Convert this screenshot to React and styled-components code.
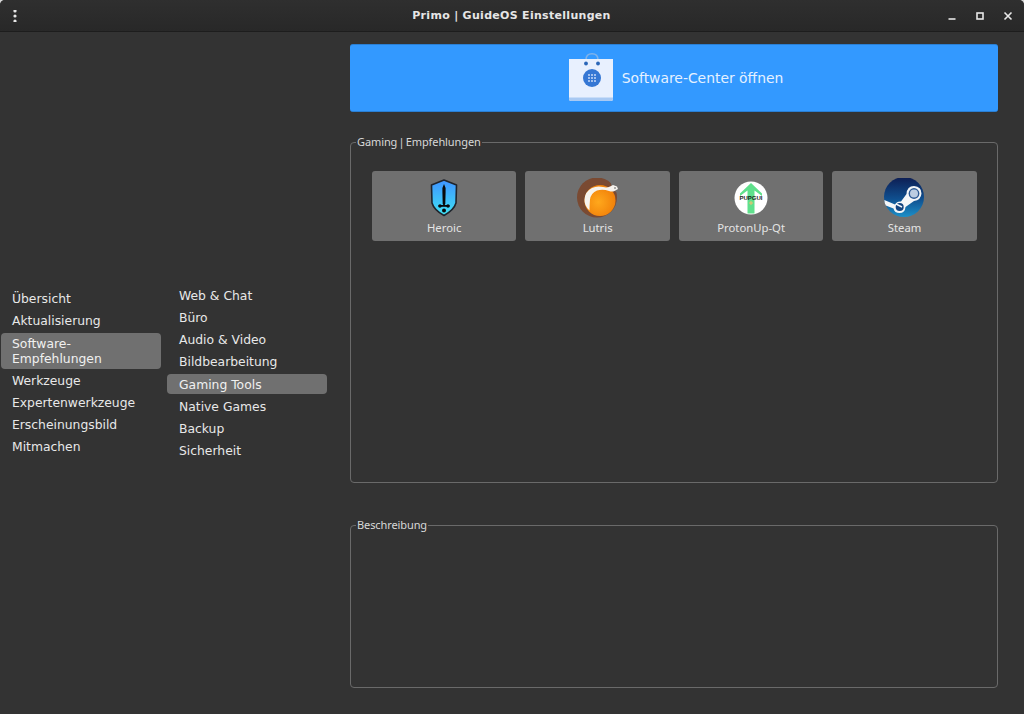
import React from "react";
import styled, { createGlobalStyle } from "styled-components";

const GlobalStyle = createGlobalStyle`
  html, body {
    margin: 0;
    padding: 0;
    height: 100%;
    background: #d8d8d8;
  }
  #root {
    height: 100%;
  }
`;

const Window = styled.div`
  height: 714px;
  display: flex;
  flex-direction: column;
  background: #333333;
  border-radius: 5px 5px 0 0;
  overflow: hidden;
  color: #eeeeee;
  font-family: "DejaVu Sans", sans-serif;
`;
const TitleBar = styled.header`
  height: 32px;
  flex: none;
  display: grid;
  grid-template-columns: 1fr auto 1fr;
  align-items: center;
  box-sizing: border-box;
  padding: 0 10px 0 9px;
  background: linear-gradient(#2f2f2f, #282828);
  border-bottom: 1px solid #1d1d1d;
`;
const Title = styled.h1`
  margin: 0;
  font-size: 11px;
  font-weight: 700;
  letter-spacing: 0.3px;
  color: #e6e6e6;
`;
const Controls = styled.div`
  display: flex;
  gap: 16px;
  justify-content: flex-end;
`;
const ControlIcon = styled.svg`
  display: block;
  width: 12px;
  height: 12px;
`;
const Body = styled.main`
  flex: 1;
  display: flex;
  padding: 12px 26px 26px 1px;
  min-height: 0;
`;
const Nav = styled.nav`
  width: 160px;
  flex: none;
  margin: -12px 6px -26px 0;
  display: flex;
  flex-direction: column;
  justify-content: center;
`;
const SubNav = styled(Nav)`
  margin-top: -11px;
  margin-right: 23px;
`;
const NavItem = styled.div`
  box-sizing: border-box;
  min-height: 22px;
  display: flex;
  align-items: center;
  padding: 0 11px;
  font-size: 12.35px;
  line-height: 15px;
  color: ${(p) => (p.$active ? "#f0f0f0" : "#e8e8e8")};
  background: ${(p) => (p.$active ? "#707070" : "transparent")};
  border-radius: 4px;
`;
const MainItem = styled(NavItem)`
  ${(p) => p.$active && "margin: 1px 0; padding-top: 4px; padding-bottom: 2px;"}
`;
const SubItem = styled(NavItem)`
  padding: 0 12px;
  ${(p) => p.$active && "min-height: 20px; margin: 1px 0 2px; padding-top: 2px;"}
`;
const Content = styled.section`
  flex: 1;
  display: flex;
  flex-direction: column;
  min-width: 0;
`;
const StoreButton = styled.button`
  height: 68px;
  flex: none;
  border: 0;
  border-radius: 3px;
  background: #3399ff;
  border-top: 1px solid #2a7fd4;
  border-bottom: 1px solid #2a7fd4;
  display: flex;
  align-items: center;
  justify-content: center;
  gap: 9px;
  color: #e6f1ff;
  font-family: "DejaVu Sans", sans-serif;
  font-size: 13.9px;
  padding: 0 0 0 4px;
`;
const Group = styled.fieldset`
  margin: 0;
  min-width: 0;
  padding: 0;
  border: 1px solid #6a6a6a;
  border-radius: 4px;
  box-sizing: border-box;
`;
const RecommendGroup = styled(Group)`
  height: 350px;
  margin-top: 22px;
`;
const DescriptionGroup = styled(Group)`
  height: 171px;
  margin-top: 34px;
`;
const Legend = styled.legend`
  margin-left: 5px;
  padding: 0 1px;
  font-family: "Noto Sans", sans-serif;
  font-size: 11px;
  letter-spacing: -0.1px;
  word-spacing: -1.5px;
  line-height: 16px;
  color: #d8d8d8;
`;
const AppGrid = styled.div`
  display: grid;
  grid-template-columns: repeat(4, 144.3px);
  gap: 9.2px;
  padding: 21px 0 0 21px;
`;
const AppCard = styled.button`
  height: 70px;
  border: 0;
  padding: 7px 0 0;
  border-radius: 3px;
  background: #707070;
  display: flex;
  flex-direction: column;
  align-items: center;
  color: #e4e4e4;
  font-family: "Noto Sans", sans-serif;
  font-size: 11.3px;
  line-height: 16px;
`;
const IconBox = styled.svg`
  display: block;
  width: 42px;
  height: 42px;
`;
const BagIcon = styled.svg`
  display: block;
  width: 44px;
  height: 48px;
  margin-bottom: 2px;
`;

const HeroicIcon = () => (
  <IconBox viewBox="0 0 42 42">
    <defs>
      <linearGradient id="heroicFill" x1="0" y1="0" x2="0" y2="1">
        <stop offset="0" stopColor="#3f93ff" />
        <stop offset="1" stopColor="#3fe3f5" />
      </linearGradient>
    </defs>
    <path d="M21 2 L33.5 7 L33 25 Q31 32 21 37.5 Q11 32 9 25 L8.5 7 Z" fill="url(#heroicFill)" stroke="#20242c" strokeWidth="1.6" strokeLinejoin="round" />
    <path d="M21 6 Q23 9 22.6 14 L22.3 26 L21 28 L19.7 26 L19.4 14 Q19 9 21 6 Z" fill="#0a0a0a" />
    <path d="M15.5 27 h11 v1.8 h-11 Z" fill="#0a0a0a" />
    <circle cx="17" cy="28" r="1.7" fill="#0a0a0a" />
    <circle cx="25" cy="28" r="1.7" fill="#0a0a0a" />
    <circle cx="21" cy="32.5" r="2" fill="#0a0a0a" />
  </IconBox>
);

const LutrisIcon = () => (
  <IconBox viewBox="0 1.5 42 42">
    <defs>
      <radialGradient id="lutrisFill" cx="0.45" cy="0.55" r="0.6">
        <stop offset="0" stopColor="#ffa81c" />
        <stop offset="1" stopColor="#f07e08" />
      </radialGradient>
    </defs>
    <circle cx="20" cy="21" r="20" fill="#7a4a32" />
    <path d="M33 4 L42 8 L41 16 L36 14 Z" fill="#707070" />
    <circle cx="23" cy="24" r="15.5" fill="url(#lutrisFill)" />
    <path d="M12.5 34 Q7 29 7.5 23 Q8 15 15 11.5 Q20 9 26 10.5 Q30 11.5 33 10 L36 8.5 L40 10 L41 12.5 L37.5 14.5 Q35 15.5 32 14.5 Q26 12.5 20 14 Q14 16.5 13 23 Q12.5 29 12.5 34 Z" fill="#f6f3ee" />
    <circle cx="38" cy="11.5" r="0.7" fill="#333333" />
  </IconBox>
);

const ProtonIcon = () => (
  <IconBox viewBox="0 2 42 42">
    <circle cx="21" cy="22" r="16.5" fill="#ffffff" />
    <path d="M21 7 L32 17.5 L32 20 L24.5 14.5 L24.5 37.5 L17.5 37.5 L17.5 14.5 L10 20 L10 17.5 Z" fill="#5fe08c" />
    <text x="21" y="23.5" textAnchor="middle" fontFamily="Liberation Sans, sans-serif" fontWeight="700" fontSize="6" fill="#1b1b1b">PUPGUI</text>
    <path d="M19 27 h4 M21 25 v4" stroke="#f0c070" strokeWidth="1" />
  </IconBox>
);

const SteamIcon = () => (
  <IconBox viewBox="1 2 42 42">
    <defs>
      <linearGradient id="steamFill" x1="0" y1="0" x2="0" y2="1">
        <stop offset="0" stopColor="#0e1d52" />
        <stop offset="0.55" stopColor="#0f4f8f" />
        <stop offset="1" stopColor="#1c8fc8" />
      </linearGradient>
    </defs>
    <circle cx="21" cy="21" r="20" fill="url(#steamFill)" />
    <path d="M1.3 24 L12 28.5 Q14 25 18 25.5 L23.5 18 Q24 10 31 10 Q38.5 10.5 38.5 17.5 Q38 24 31 25 L22.5 31 Q22 37 16.5 37 Q11.5 37 10.5 32.5 L2.8 29.5 Q1.5 27 1.3 24 Z" fill="#f4f6f8" />
    <circle cx="31" cy="17.5" r="5.4" fill="#2d5a94" />
    <circle cx="31" cy="17.5" r="4" fill="#bccde2" />
    <circle cx="16.7" cy="31" r="4" fill="#14447f" />
    <path d="M13 28 L19 31" stroke="#f4f6f8" strokeWidth="1.5" />
  </IconBox>
);

const StoreBag = () => (
  <BagIcon viewBox="0 0 44 48">
    <path d="M17 12 V7 Q17 0.8 23 0.8 Q29 0.8 29 7 V12" fill="none" stroke="#7fb2ea" strokeWidth="1.6" />
    <path d="M0 6 H44 V46 Q44 48 42 48 H2 Q0 48 0 46 Z" fill="#e8f0fe" />
    <path d="M0 44.5 H44 V46 Q44 48 42 48 H2 Q0 48 0 46 Z" fill="#a8c9f3" />
    <circle cx="17" cy="10.5" r="1.9" fill="#2a66b8" />
    <circle cx="29" cy="10.5" r="1.9" fill="#2a66b8" />
    <circle cx="23" cy="25" r="9" fill="#3577d4" />
    {[20, 23, 26].flatMap((x) =>
      [22, 25, 28].map((y) => (
        <rect key={`${x}-${y}`} x={x - 0.8} y={y - 0.8} width="1.6" height="1.6" fill="#dfeafc" />
      ))
    )}
  </BagIcon>
);

const mainItems = ["Übersicht", "Aktualisierung", "Software-Empfehlungen", "Werkzeuge", "Expertenwerkzeuge", "Erscheinungsbild", "Mitmachen"];
const subItems = ["Web & Chat", "Büro", "Audio & Video", "Bildbearbeitung", "Gaming Tools", "Native Games", "Backup", "Sicherheit"];
const apps = [
  { name: "Heroic", Icon: HeroicIcon },
  { name: "Lutris", Icon: LutrisIcon },
  { name: "ProtonUp-Qt", Icon: ProtonIcon },
  { name: "Steam", Icon: SteamIcon },
];

export default function App() {
  return (
    <Window>
      <GlobalStyle />
      <TitleBar>
        <ControlIcon viewBox="0 0 12 12">
          <circle cx="6" cy="1" r="1.6" fill="#e8e8e8" />
          <circle cx="6" cy="6" r="1.6" fill="#e8e8e8" />
          <circle cx="6" cy="11" r="1.6" fill="#e8e8e8" />
        </ControlIcon>
        <Title>Primo | GuideOS Einstellungen</Title>
        <Controls>
          <ControlIcon viewBox="0 0 12 12">
            <path d="M2.5 9 H9.5" stroke="#e8e8e8" strokeWidth="1.6" />
          </ControlIcon>
          <ControlIcon viewBox="0 0 12 12">
            <rect x="3" y="3" width="6" height="6" fill="none" stroke="#e8e8e8" strokeWidth="1.6" />
          </ControlIcon>
          <ControlIcon viewBox="0 0 12 12">
            <path d="M2.5 2.5 L9.5 9.5 M9.5 2.5 L2.5 9.5" stroke="#e8e8e8" strokeWidth="1.6" />
          </ControlIcon>
        </Controls>
      </TitleBar>
      <Body>
        <Nav>
          {mainItems.map((item) => (
            <MainItem key={item} $active={item === "Software-Empfehlungen"}>
              {item === "Software-Empfehlungen" ? (
                <span>
                  Software-
                  <br />
                  Empfehlungen
                </span>
              ) : (
                item
              )}
            </MainItem>
          ))}
        </Nav>
        <SubNav>
          {subItems.map((item) => (
            <SubItem key={item} $active={item === "Gaming Tools"}>
              {item}
            </SubItem>
          ))}
        </SubNav>
        <Content>
          <StoreButton>
            <StoreBag />
            Software-Center öffnen
          </StoreButton>
          <RecommendGroup>
            <Legend>Gaming | Empfehlungen</Legend>
            <AppGrid>
              {apps.map(({ name, Icon }) => (
                <AppCard key={name}>
                  <Icon />
                  {name}
                </AppCard>
              ))}
            </AppGrid>
          </RecommendGroup>
          <DescriptionGroup>
            <Legend>Beschreibung</Legend>
          </DescriptionGroup>
        </Content>
      </Body>
    </Window>
  );
}
